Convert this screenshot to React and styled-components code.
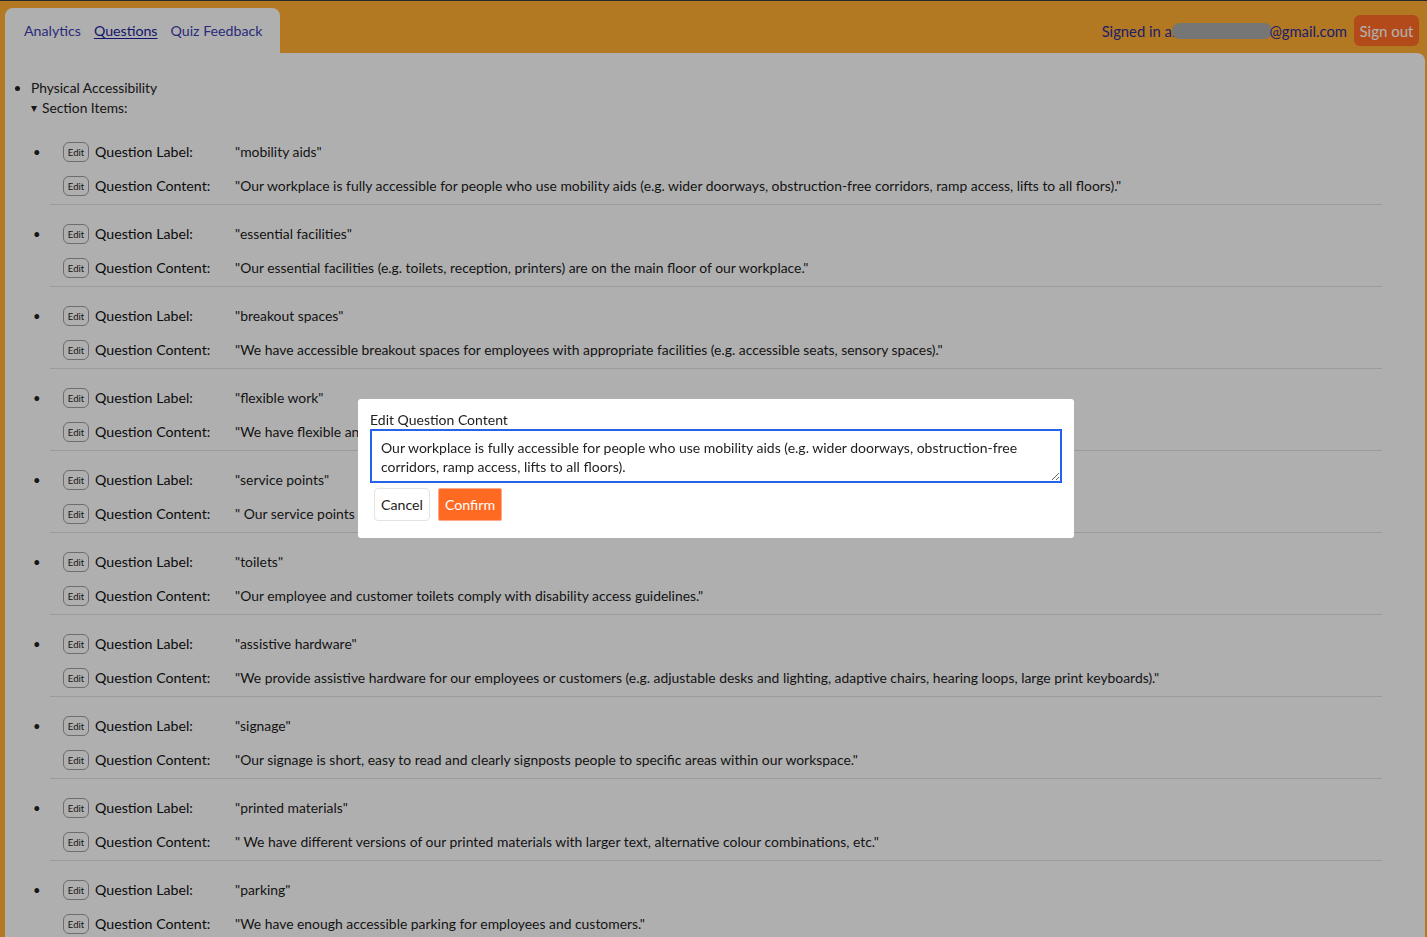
import React from 'react'
import styled, { createGlobalStyle } from 'styled-components'

const GlobalStyle = createGlobalStyle`
  html, body {
    margin: 0;
    padding: 0;
  }
  body {
    background: #ffae32;
    font-family: Lato, "Noto Sans", sans-serif;
    color: #222;
    border-top: 1px solid #3a3a3a;
    overflow: hidden;
  }
`

const items = [
  { label: 'mobility aids', content: 'Our workplace is fully accessible for people who use mobility aids (e.g. wider doorways, obstruction-free corridors, ramp access, lifts to all floors).' },
  { label: 'essential facilities', content: 'Our essential facilities (e.g. toilets, reception, printers) are on the main floor of our workplace.' },
  { label: 'breakout spaces', content: 'We have accessible breakout spaces for employees with appropriate facilities (e.g. accessible seats, sensory spaces).' },
  { label: 'flexible work', content: 'We have flexible and hybrid working arrangements for employees who need them.' },
  { label: 'service points', content: ' Our service points can be reached and used by people of all heights and abilities.' },
  { label: 'toilets', content: 'Our employee and customer toilets comply with disability access guidelines.' },
  { label: 'assistive hardware', content: 'We provide assistive hardware for our employees or customers (e.g. adjustable desks and lighting, adaptive chairs, hearing loops, large print keyboards).' },
  { label: 'signage', content: 'Our signage is short, easy to read and clearly signposts people to specific areas within our workspace.' },
  { label: 'printed materials', content: ' We have different versions of our printed materials with larger text, alternative colour combinations, etc.' },
  { label: 'parking', content: 'We have enough accessible parking for employees and customers.' },
]

function App() {
  return (
    <>
      <GlobalStyle />
      <Header>
        <NavTab>
          <NavLink>Analytics</NavLink>
          <NavLink active>Questions</NavLink>
          <NavLink>Quiz Feedback</NavLink>
        </NavTab>
        <HeaderRight>
          <SignedIn>
            Signed in as<Redacted />@gmail.com
          </SignedIn>
          <SignOut>Sign out</SignOut>
        </HeaderRight>
      </Header>

      <Panel>
        <SectionList>
          <li>
            Physical Accessibility
            <Details open>
              <Summary><Caret>▾</Caret>Section Items:</Summary>
              <ItemList>
                {items.map((item) => (
                  <Item key={item.label}>
                    <Bullet>•</Bullet>
                    <ItemBody>
                      <Row>
                        <EditButton>Edit</EditButton>
                        <FieldName>Question Label:</FieldName>
                        <FieldValue>"{item.label}"</FieldValue>
                      </Row>
                      <Row>
                        <EditButton>Edit</EditButton>
                        <FieldName>Question Content:</FieldName>
                        <FieldValue>"{item.content}"</FieldValue>
                      </Row>
                    </ItemBody>
                  </Item>
                ))}
              </ItemList>
            </Details>
          </li>
        </SectionList>
      </Panel>

      <Overlay>
        <Modal>
          <ModalLabel>Edit Question Content</ModalLabel>
          <TextArea
            defaultValue="Our workplace is fully accessible for people who use mobility aids (e.g. wider doorways, obstruction-free corridors, ramp access, lifts to all floors)."
          />
          <ModalActions>
            <CancelButton>Cancel</CancelButton>
            <ConfirmButton>Confirm</ConfirmButton>
          </ModalActions>
        </Modal>
      </Overlay>
    </>
  )
}

export default App

const Header = styled.header`
  display: flex;
  justify-content: space-between;
  align-items: flex-start;
  height: 52px;
  padding-left: 5px;
`
const NavTab = styled.nav`
  margin-top: 7px;
  width: 256px;
  height: 45px;
  padding-left: 19px;
  box-sizing: content-box;
  background: #fbfbfb;
  border-radius: 8px 8px 0 0;
  display: flex;
  align-items: center;
  gap: 13px;
`
const NavLink = styled.a`
  font-size: 14.2px;
  color: ${(p) => (p.active ? '#1c1c9a' : '#3d3db0')};
  text-decoration: ${(p) => (p.active ? 'underline' : 'none')};
  text-underline-offset: 2px;
  cursor: pointer;
`
const HeaderRight = styled.div`
  display: flex;
  align-items: center;
  gap: 7px;
  margin-top: 14px;
  margin-right: 8px;
`
const SignedIn = styled.span`
  display: flex;
  align-items: center;
  font-size: 14.8px;
  color: #2c2c9a;
`
const Redacted = styled.span`
  display: inline-block;
  width: 100px;
  height: 16px;
  margin-left: -6px;
  margin-right: -3px;
  border-radius: 8px;
  background: #aaa;
`
const SignOut = styled.button`
  height: 31px;
  width: 65px;
  border: none;
  border-radius: 6px;
  background: #ff6a25;
  color: #fff;
  font-family: inherit;
  font-size: 15px;
  padding: 0;
`
const Panel = styled.main`
  margin: 0 2px 0 5px;
  min-height: 900px;
  background: #fbfbfb;
  border-top-right-radius: 8px;
  padding-top: 25px;
  font-size: 13.8px;
  line-height: 20px;
`
const SectionList = styled.ul`
  margin: 0;
  padding-left: 26px;
  list-style: disc;
`
const Details = styled.details`
  margin: 0;
`
const Summary = styled.summary`
  list-style: none;
  display: flex;
  align-items: center;
  &::-webkit-details-marker { display: none; }
`
const Caret = styled.span`
  font-size: 12px;
  width: 11px;
`
const ItemList = styled.div`
  margin-top: 5px;
  margin-left: -1px;
  margin-right: 43px;
`
const Item = styled.div`
  display: grid;
  grid-template-columns: 20px 1fr;
`
const Bullet = styled.span`
  font-size: 13px;
  line-height: 34px;
  padding-top: 12px;
  padding-left: 3px;
`
const ItemBody = styled.div`
  padding: 12px 0 1px;
  border-bottom: 1px solid #dfdfdf;
`
const Row = styled.div`
  display: flex;
  align-items: center;
  height: 34px;
  padding-left: 13px;
`
const EditButton = styled.button`
  width: 26px;
  height: 20px;
  padding: 0;
  margin-right: 6px;
  border: 1px solid #9c9c9c;
  border-radius: 6px;
  background: transparent;
  font-family: inherit;
  font-size: 9.5px;
  color: #222;
`
const FieldName = styled.span`
  width: 140px;
  flex-shrink: 0;
  font-size: 14.2px;
  color: #111;
`
const FieldValue = styled.span`
  white-space: pre;
  font-size: 13.9px;
  color: #1c1c1c;
`
const Overlay = styled.div`
  position: fixed;
  inset: 0;
  background: rgba(0, 0, 0, 0.3);
  display: flex;
  align-items: center;
  justify-content: center;
`
const Modal = styled.div`
  width: 692px;
  margin-left: 5px;
  padding: 12px 12px 17px;
  background: #fff;
  border-radius: 3px;
  font-size: 14px;
  color: #222;
`
const ModalLabel = styled.div`
  line-height: 18px;
`
const TextArea = styled.textarea`
  display: block;
  box-sizing: border-box;
  width: 692px;
  height: 54px;
  margin: 0;
  padding: 7px 9px;
  border: 2px solid #2563eb;
  outline: none;
  border-radius: 0;
  font-family: inherit;
  font-size: 14px;
  line-height: 19px;
  color: #222;
`
const ModalActions = styled.div`
  display: flex;
  gap: 8px;
  margin-top: 5px;
  padding-left: 4px;
`
const CancelButton = styled.button`
  height: 33px;
  padding: 0 6px;
  border: 1px solid #e3e3e3;
  border-radius: 4px;
  background: #fff;
  font-family: inherit;
  font-size: 14.2px;
  color: #222;
`
const ConfirmButton = styled.button`
  height: 33px;
  padding: 0 6px;
  border: 1px solid #ffa88a;
  border-radius: 2px;
  background: #ff6a22;
  font-family: inherit;
  font-size: 14.2px;
  color: #fff;
`
